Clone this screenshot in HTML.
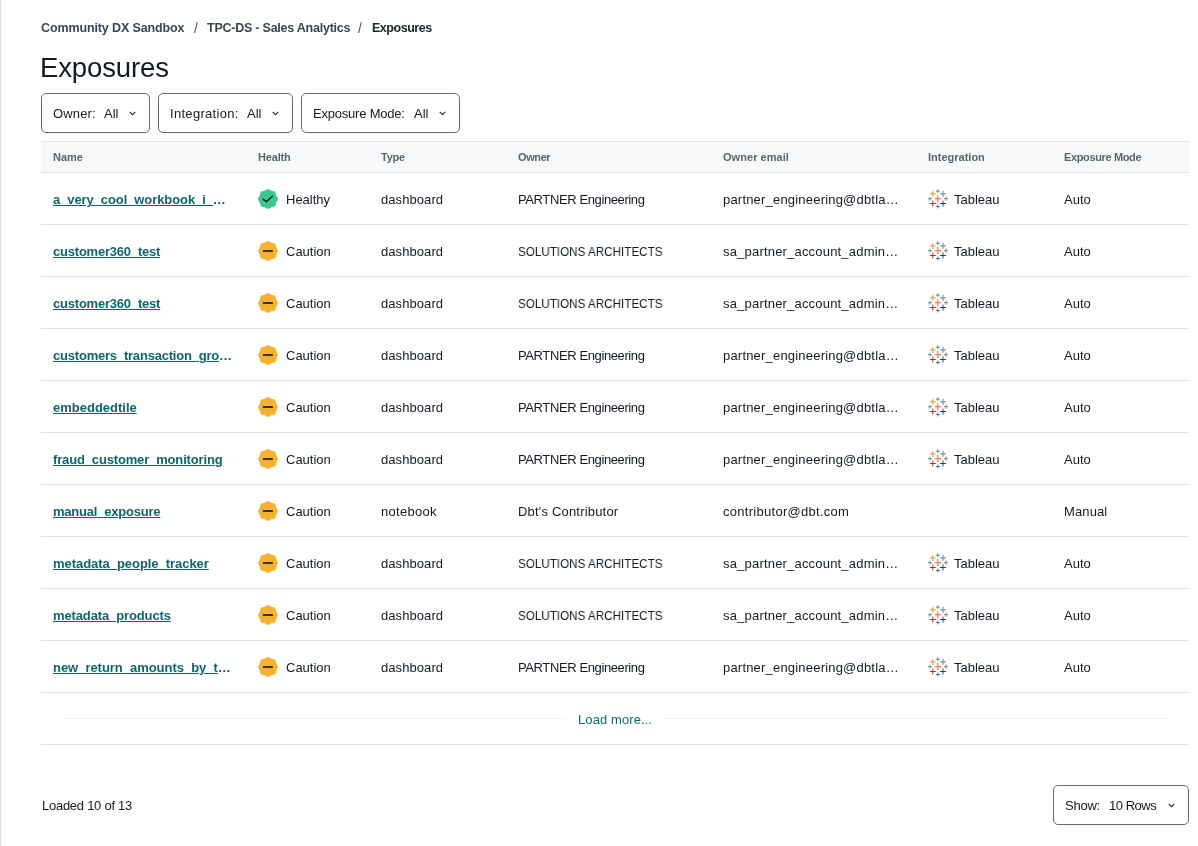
<!DOCTYPE html>
<html><head><meta charset="utf-8"><title>Exposures</title>
<style>
*{box-sizing:border-box;margin:0;padding:0}
html,body{width:1198px;height:846px;overflow:hidden;background:#fff}
body{font-family:"Liberation Sans",sans-serif;color:#1b2330;position:relative;-webkit-font-smoothing:antialiased}
.lb{position:absolute;left:0;top:0;width:1px;height:846px;background:#dfe1e6}
.lb2{position:absolute;left:1px;top:0;width:1px;height:846px;background:#f6f7f9}
.t{position:absolute;white-space:nowrap;line-height:20px;height:20px;will-change:transform}
.bc{font-weight:bold;font-size:12.5px;color:#3b4555}
.bcs{font-size:14px;color:#4f5866}
.bcc{font-weight:bold;font-size:12.5px;color:#1b2330}
.title{font-size:27.5px;line-height:40px;height:40px;color:#121a26}
.btn{position:absolute;top:93px;height:40px;border:1px solid #626b79;border-radius:5px;background:#fff}
.ft{font-size:13px;color:#131a26}
.chev{position:absolute}
.tbl{position:absolute;left:41px;top:141px;width:1148px}
.hdr{position:absolute;left:41px;top:141px;width:1148px;height:32px;background:#f7f8fa;border-top:1px solid #e2e3ea;border-bottom:1px solid #e2e3ea}
.hl{position:absolute;left:41px;width:1148px;height:1px;background:#e2e3ea}
.ht{font-weight:bold;font-size:11px;color:#5b6473}
.lk{font-weight:bold;font-size:13px;color:#0f666a}
.lk u{text-decoration:underline;text-decoration-thickness:1px;text-underline-offset:1px}
.c{font-size:13px;color:#131a26}
.bdg,.tab{position:absolute}
.faint{position:absolute;top:718px;height:1px;background:#f2f3f5}
.lm{font-size:13px;color:#116b70}
.sbtn{position:absolute;left:1053px;top:785px;width:136px;height:40px;border:1px solid #626b79;border-radius:5px}
</style></head><body>
<div class="lb"></div><div class="lb2"></div>

<div class="t bc" style="left:41px;top:17.67px;letter-spacing:-0.121px;">Community DX Sandbox</div>
<div class="t bcs" style="left:193.6px;top:17.65px;">/</div>
<div class="t bc" style="left:207px;top:17.67px;letter-spacing:-0.234px;">TPC-DS - Sales Analytics</div>
<div class="t bcs" style="left:358px;top:17.65px;">/</div>
<div class="t bcc" style="left:372px;top:17.67px;letter-spacing:-0.475px;">Exposures</div>
<div class="t title" style="left:40px;top:48.47px;letter-spacing:-0.126px;">Exposures</div>
<div class="btn" style="left:41px;width:109px"></div>
<div class="btn" style="left:158px;width:135px"></div>
<div class="btn" style="left:301px;width:159px"></div>
<div class="t ft" style="left:53px;top:103.50px;letter-spacing:0.140px;">Owner:</div>
<div class="t ft" style="left:104px;top:103.50px;">All</div>
<svg class="chev" style="left:128.5px;top:111px" width="7" height="5" viewBox="0 0 7 5"><path d="M0.7 0.9 L3.5 3.7 L6.3 0.9" fill="none" stroke="#252d3a" stroke-width="1.1"/></svg>
<div class="t ft" style="left:170px;top:103.50px;letter-spacing:0.300px;">Integration:</div>
<div class="t ft" style="left:246.5px;top:103.50px;">All</div>
<svg class="chev" style="left:272px;top:111px" width="7" height="5" viewBox="0 0 7 5"><path d="M0.7 0.9 L3.5 3.7 L6.3 0.9" fill="none" stroke="#252d3a" stroke-width="1.1"/></svg>
<div class="t ft" style="left:313px;top:103.50px;letter-spacing:-0.208px;">Exposure Mode:</div>
<div class="t ft" style="left:413.5px;top:103.50px;">All</div>
<svg class="chev" style="left:439px;top:111px" width="7" height="5" viewBox="0 0 7 5"><path d="M0.7 0.9 L3.5 3.7 L6.3 0.9" fill="none" stroke="#252d3a" stroke-width="1.1"/></svg>
<div class="hdr"></div>
<div class="t ht" style="left:53px;top:147.19px;">Name</div>
<div class="t ht" style="left:258px;top:147.19px;letter-spacing:-0.160px;">Health</div>
<div class="t ht" style="left:381px;top:147.19px;letter-spacing:-0.233px;">Type</div>
<div class="t ht" style="left:518px;top:147.19px;letter-spacing:-0.400px;">Owner</div>
<div class="t ht" style="left:723px;top:147.19px;letter-spacing:0.050px;">Owner email</div>
<div class="t ht" style="left:928px;top:147.19px;">Integration</div>
<div class="t ht" style="left:1064px;top:147.19px;letter-spacing:-0.367px;">Exposure Mode</div>
<div class="t lk" style="left:53px;top:189.50px;letter-spacing:-0.087px;"><u>a_very_cool_workbook_i_</u>…</div>
<svg class="bdg" style="left:258px;top:189px" width="20" height="20" viewBox="0 0 20 20"><path d="M10.00 0.05 L10.65 0.14 L11.27 0.38 L11.84 0.73 L12.38 1.11 L12.90 1.46 L13.43 1.73 L13.99 1.91 L14.60 2.03 L15.25 2.14 L15.90 2.30 L16.52 2.57 L17.04 2.96 L17.43 3.48 L17.70 4.10 L17.86 4.75 L17.97 5.40 L18.09 6.01 L18.27 6.57 L18.54 7.10 L18.89 7.62 L19.27 8.16 L19.62 8.73 L19.86 9.35 L19.95 10.00 L19.86 10.65 L19.62 11.27 L19.27 11.84 L18.89 12.38 L18.54 12.90 L18.27 13.43 L18.09 13.99 L17.97 14.60 L17.86 15.25 L17.70 15.90 L17.43 16.52 L17.04 17.04 L16.52 17.43 L15.90 17.70 L15.25 17.86 L14.60 17.97 L13.99 18.09 L13.43 18.27 L12.90 18.54 L12.38 18.89 L11.84 19.27 L11.27 19.62 L10.65 19.86 L10.00 19.95 L9.35 19.86 L8.73 19.62 L8.16 19.27 L7.62 18.89 L7.10 18.54 L6.57 18.27 L6.01 18.09 L5.40 17.97 L4.75 17.86 L4.10 17.70 L3.48 17.43 L2.96 17.04 L2.57 16.52 L2.30 15.90 L2.14 15.25 L2.03 14.60 L1.91 13.99 L1.73 13.43 L1.46 12.90 L1.11 12.38 L0.73 11.84 L0.38 11.27 L0.14 10.65 L0.05 10.00 L0.14 9.35 L0.38 8.73 L0.73 8.16 L1.11 7.62 L1.46 7.10 L1.73 6.57 L1.91 6.01 L2.03 5.40 L2.14 4.75 L2.30 4.10 L2.57 3.48 L2.96 2.96 L3.48 2.57 L4.10 2.30 L4.75 2.14 L5.40 2.03 L6.01 1.91 L6.57 1.73 L7.10 1.46 L7.62 1.11 L8.16 0.73 L8.73 0.38 L9.35 0.14Z" fill="#38ca8d"/><path d="M5.3 10.3 L8.4 12.7 L14.4 7.3" fill="none" stroke="#1a1f2c" stroke-width="1.5" stroke-linecap="round" stroke-linejoin="round"/></svg>
<div class="t c" style="left:286px;top:189.50px;">Healthy</div>
<div class="t c" style="left:381px;top:189.50px;letter-spacing:0.075px;">dashboard</div>
<div class="t c" style="left:518px;top:189.50px;letter-spacing:-0.389px;">PARTNER Engineering</div>
<div class="t c" style="left:723px;top:189.50px;letter-spacing:0.196px;">partner_engineering@dbtla…</div>
<svg class="tab" style="left:928px;top:189px" width="20" height="20" viewBox="0 0 20 20"><path d="M6.60 9.7H13.20M9.9 5.90V13.50" stroke="#e8762d" stroke-width="1.1"/><path d="M1.80 4.9H7.80M4.8 1.90V7.90" stroke="#eb912c" stroke-width="1.0"/><path d="M7.90 2.2H11.90M9.9 0.20V4.20" stroke="#5b879b" stroke-width="0.9"/><path d="M12.00 4.9H18.00M15.0 1.90V7.90" stroke="#5b879b" stroke-width="1.0"/><path d="M0.00 9.7H4.00M2.0 7.70V11.70" stroke="#5b879b" stroke-width="0.9"/><path d="M16.00 9.7H20.00M18.0 7.70V11.70" stroke="#7b75a8" stroke-width="0.9"/><path d="M1.80 14.5H7.80M4.8 11.50V17.50" stroke="#c72037" stroke-width="1.0"/><path d="M7.90 17.5H11.90M9.9 15.50V19.50" stroke="#5c6692" stroke-width="0.9"/><path d="M12.00 14.5H18.00M15.0 11.50V17.50" stroke="#1f457e" stroke-width="1.0"/></svg>
<div class="t c" style="left:954px;top:189.50px;">Tableau</div>
<div class="t c" style="left:1064px;top:189.50px;">Auto</div>
<div class="hl" style="top:224px"></div>
<div class="t lk" style="left:53px;top:241.50px;letter-spacing:-0.213px;"><u>customer360_test</u></div>
<svg class="bdg" style="left:258px;top:241px" width="20" height="20" viewBox="0 0 20 20"><path d="M10.00 0.05 L10.65 0.14 L11.27 0.38 L11.84 0.73 L12.38 1.11 L12.90 1.46 L13.43 1.73 L13.99 1.91 L14.60 2.03 L15.25 2.14 L15.90 2.30 L16.52 2.57 L17.04 2.96 L17.43 3.48 L17.70 4.10 L17.86 4.75 L17.97 5.40 L18.09 6.01 L18.27 6.57 L18.54 7.10 L18.89 7.62 L19.27 8.16 L19.62 8.73 L19.86 9.35 L19.95 10.00 L19.86 10.65 L19.62 11.27 L19.27 11.84 L18.89 12.38 L18.54 12.90 L18.27 13.43 L18.09 13.99 L17.97 14.60 L17.86 15.25 L17.70 15.90 L17.43 16.52 L17.04 17.04 L16.52 17.43 L15.90 17.70 L15.25 17.86 L14.60 17.97 L13.99 18.09 L13.43 18.27 L12.90 18.54 L12.38 18.89 L11.84 19.27 L11.27 19.62 L10.65 19.86 L10.00 19.95 L9.35 19.86 L8.73 19.62 L8.16 19.27 L7.62 18.89 L7.10 18.54 L6.57 18.27 L6.01 18.09 L5.40 17.97 L4.75 17.86 L4.10 17.70 L3.48 17.43 L2.96 17.04 L2.57 16.52 L2.30 15.90 L2.14 15.25 L2.03 14.60 L1.91 13.99 L1.73 13.43 L1.46 12.90 L1.11 12.38 L0.73 11.84 L0.38 11.27 L0.14 10.65 L0.05 10.00 L0.14 9.35 L0.38 8.73 L0.73 8.16 L1.11 7.62 L1.46 7.10 L1.73 6.57 L1.91 6.01 L2.03 5.40 L2.14 4.75 L2.30 4.10 L2.57 3.48 L2.96 2.96 L3.48 2.57 L4.10 2.30 L4.75 2.14 L5.40 2.03 L6.01 1.91 L6.57 1.73 L7.10 1.46 L7.62 1.11 L8.16 0.73 L8.73 0.38 L9.35 0.14Z" fill="#f7b232"/><rect x="4.9" y="9" width="10" height="2" fill="#3a3428"/></svg>
<div class="t c" style="left:286px;top:241.50px;">Caution</div>
<div class="t c" style="left:381px;top:241.50px;letter-spacing:0.075px;">dashboard</div>
<div class="t c" style="left:518px;top:241.50px;transform:scaleX(0.897);transform-origin:0 0;">SOLUTIONS ARCHITECTS</div>
<div class="t c" style="left:723px;top:241.50px;letter-spacing:0.192px;">sa_partner_account_admin…</div>
<svg class="tab" style="left:928px;top:241px" width="20" height="20" viewBox="0 0 20 20"><path d="M6.60 9.7H13.20M9.9 5.90V13.50" stroke="#e8762d" stroke-width="1.1"/><path d="M1.80 4.9H7.80M4.8 1.90V7.90" stroke="#eb912c" stroke-width="1.0"/><path d="M7.90 2.2H11.90M9.9 0.20V4.20" stroke="#5b879b" stroke-width="0.9"/><path d="M12.00 4.9H18.00M15.0 1.90V7.90" stroke="#5b879b" stroke-width="1.0"/><path d="M0.00 9.7H4.00M2.0 7.70V11.70" stroke="#5b879b" stroke-width="0.9"/><path d="M16.00 9.7H20.00M18.0 7.70V11.70" stroke="#7b75a8" stroke-width="0.9"/><path d="M1.80 14.5H7.80M4.8 11.50V17.50" stroke="#c72037" stroke-width="1.0"/><path d="M7.90 17.5H11.90M9.9 15.50V19.50" stroke="#5c6692" stroke-width="0.9"/><path d="M12.00 14.5H18.00M15.0 11.50V17.50" stroke="#1f457e" stroke-width="1.0"/></svg>
<div class="t c" style="left:954px;top:241.50px;">Tableau</div>
<div class="t c" style="left:1064px;top:241.50px;">Auto</div>
<div class="hl" style="top:276px"></div>
<div class="t lk" style="left:53px;top:293.50px;letter-spacing:-0.213px;"><u>customer360_test</u></div>
<svg class="bdg" style="left:258px;top:293px" width="20" height="20" viewBox="0 0 20 20"><path d="M10.00 0.05 L10.65 0.14 L11.27 0.38 L11.84 0.73 L12.38 1.11 L12.90 1.46 L13.43 1.73 L13.99 1.91 L14.60 2.03 L15.25 2.14 L15.90 2.30 L16.52 2.57 L17.04 2.96 L17.43 3.48 L17.70 4.10 L17.86 4.75 L17.97 5.40 L18.09 6.01 L18.27 6.57 L18.54 7.10 L18.89 7.62 L19.27 8.16 L19.62 8.73 L19.86 9.35 L19.95 10.00 L19.86 10.65 L19.62 11.27 L19.27 11.84 L18.89 12.38 L18.54 12.90 L18.27 13.43 L18.09 13.99 L17.97 14.60 L17.86 15.25 L17.70 15.90 L17.43 16.52 L17.04 17.04 L16.52 17.43 L15.90 17.70 L15.25 17.86 L14.60 17.97 L13.99 18.09 L13.43 18.27 L12.90 18.54 L12.38 18.89 L11.84 19.27 L11.27 19.62 L10.65 19.86 L10.00 19.95 L9.35 19.86 L8.73 19.62 L8.16 19.27 L7.62 18.89 L7.10 18.54 L6.57 18.27 L6.01 18.09 L5.40 17.97 L4.75 17.86 L4.10 17.70 L3.48 17.43 L2.96 17.04 L2.57 16.52 L2.30 15.90 L2.14 15.25 L2.03 14.60 L1.91 13.99 L1.73 13.43 L1.46 12.90 L1.11 12.38 L0.73 11.84 L0.38 11.27 L0.14 10.65 L0.05 10.00 L0.14 9.35 L0.38 8.73 L0.73 8.16 L1.11 7.62 L1.46 7.10 L1.73 6.57 L1.91 6.01 L2.03 5.40 L2.14 4.75 L2.30 4.10 L2.57 3.48 L2.96 2.96 L3.48 2.57 L4.10 2.30 L4.75 2.14 L5.40 2.03 L6.01 1.91 L6.57 1.73 L7.10 1.46 L7.62 1.11 L8.16 0.73 L8.73 0.38 L9.35 0.14Z" fill="#f7b232"/><rect x="4.9" y="9" width="10" height="2" fill="#3a3428"/></svg>
<div class="t c" style="left:286px;top:293.50px;">Caution</div>
<div class="t c" style="left:381px;top:293.50px;letter-spacing:0.075px;">dashboard</div>
<div class="t c" style="left:518px;top:293.50px;transform:scaleX(0.897);transform-origin:0 0;">SOLUTIONS ARCHITECTS</div>
<div class="t c" style="left:723px;top:293.50px;letter-spacing:0.192px;">sa_partner_account_admin…</div>
<svg class="tab" style="left:928px;top:293px" width="20" height="20" viewBox="0 0 20 20"><path d="M6.60 9.7H13.20M9.9 5.90V13.50" stroke="#e8762d" stroke-width="1.1"/><path d="M1.80 4.9H7.80M4.8 1.90V7.90" stroke="#eb912c" stroke-width="1.0"/><path d="M7.90 2.2H11.90M9.9 0.20V4.20" stroke="#5b879b" stroke-width="0.9"/><path d="M12.00 4.9H18.00M15.0 1.90V7.90" stroke="#5b879b" stroke-width="1.0"/><path d="M0.00 9.7H4.00M2.0 7.70V11.70" stroke="#5b879b" stroke-width="0.9"/><path d="M16.00 9.7H20.00M18.0 7.70V11.70" stroke="#7b75a8" stroke-width="0.9"/><path d="M1.80 14.5H7.80M4.8 11.50V17.50" stroke="#c72037" stroke-width="1.0"/><path d="M7.90 17.5H11.90M9.9 15.50V19.50" stroke="#5c6692" stroke-width="0.9"/><path d="M12.00 14.5H18.00M15.0 11.50V17.50" stroke="#1f457e" stroke-width="1.0"/></svg>
<div class="t c" style="left:954px;top:293.50px;">Tableau</div>
<div class="t c" style="left:1064px;top:293.50px;">Auto</div>
<div class="hl" style="top:328px"></div>
<div class="t lk" style="left:53px;top:345.50px;letter-spacing:-0.208px;"><u>customers_transaction_gro</u>…</div>
<svg class="bdg" style="left:258px;top:345px" width="20" height="20" viewBox="0 0 20 20"><path d="M10.00 0.05 L10.65 0.14 L11.27 0.38 L11.84 0.73 L12.38 1.11 L12.90 1.46 L13.43 1.73 L13.99 1.91 L14.60 2.03 L15.25 2.14 L15.90 2.30 L16.52 2.57 L17.04 2.96 L17.43 3.48 L17.70 4.10 L17.86 4.75 L17.97 5.40 L18.09 6.01 L18.27 6.57 L18.54 7.10 L18.89 7.62 L19.27 8.16 L19.62 8.73 L19.86 9.35 L19.95 10.00 L19.86 10.65 L19.62 11.27 L19.27 11.84 L18.89 12.38 L18.54 12.90 L18.27 13.43 L18.09 13.99 L17.97 14.60 L17.86 15.25 L17.70 15.90 L17.43 16.52 L17.04 17.04 L16.52 17.43 L15.90 17.70 L15.25 17.86 L14.60 17.97 L13.99 18.09 L13.43 18.27 L12.90 18.54 L12.38 18.89 L11.84 19.27 L11.27 19.62 L10.65 19.86 L10.00 19.95 L9.35 19.86 L8.73 19.62 L8.16 19.27 L7.62 18.89 L7.10 18.54 L6.57 18.27 L6.01 18.09 L5.40 17.97 L4.75 17.86 L4.10 17.70 L3.48 17.43 L2.96 17.04 L2.57 16.52 L2.30 15.90 L2.14 15.25 L2.03 14.60 L1.91 13.99 L1.73 13.43 L1.46 12.90 L1.11 12.38 L0.73 11.84 L0.38 11.27 L0.14 10.65 L0.05 10.00 L0.14 9.35 L0.38 8.73 L0.73 8.16 L1.11 7.62 L1.46 7.10 L1.73 6.57 L1.91 6.01 L2.03 5.40 L2.14 4.75 L2.30 4.10 L2.57 3.48 L2.96 2.96 L3.48 2.57 L4.10 2.30 L4.75 2.14 L5.40 2.03 L6.01 1.91 L6.57 1.73 L7.10 1.46 L7.62 1.11 L8.16 0.73 L8.73 0.38 L9.35 0.14Z" fill="#f7b232"/><rect x="4.9" y="9" width="10" height="2" fill="#3a3428"/></svg>
<div class="t c" style="left:286px;top:345.50px;">Caution</div>
<div class="t c" style="left:381px;top:345.50px;letter-spacing:0.075px;">dashboard</div>
<div class="t c" style="left:518px;top:345.50px;letter-spacing:-0.389px;">PARTNER Engineering</div>
<div class="t c" style="left:723px;top:345.50px;letter-spacing:0.196px;">partner_engineering@dbtla…</div>
<svg class="tab" style="left:928px;top:345px" width="20" height="20" viewBox="0 0 20 20"><path d="M6.60 9.7H13.20M9.9 5.90V13.50" stroke="#e8762d" stroke-width="1.1"/><path d="M1.80 4.9H7.80M4.8 1.90V7.90" stroke="#eb912c" stroke-width="1.0"/><path d="M7.90 2.2H11.90M9.9 0.20V4.20" stroke="#5b879b" stroke-width="0.9"/><path d="M12.00 4.9H18.00M15.0 1.90V7.90" stroke="#5b879b" stroke-width="1.0"/><path d="M0.00 9.7H4.00M2.0 7.70V11.70" stroke="#5b879b" stroke-width="0.9"/><path d="M16.00 9.7H20.00M18.0 7.70V11.70" stroke="#7b75a8" stroke-width="0.9"/><path d="M1.80 14.5H7.80M4.8 11.50V17.50" stroke="#c72037" stroke-width="1.0"/><path d="M7.90 17.5H11.90M9.9 15.50V19.50" stroke="#5c6692" stroke-width="0.9"/><path d="M12.00 14.5H18.00M15.0 11.50V17.50" stroke="#1f457e" stroke-width="1.0"/></svg>
<div class="t c" style="left:954px;top:345.50px;">Tableau</div>
<div class="t c" style="left:1064px;top:345.50px;">Auto</div>
<div class="hl" style="top:380px"></div>
<div class="t lk" style="left:53px;top:397.50px;"><u>embeddedtile</u></div>
<svg class="bdg" style="left:258px;top:397px" width="20" height="20" viewBox="0 0 20 20"><path d="M10.00 0.05 L10.65 0.14 L11.27 0.38 L11.84 0.73 L12.38 1.11 L12.90 1.46 L13.43 1.73 L13.99 1.91 L14.60 2.03 L15.25 2.14 L15.90 2.30 L16.52 2.57 L17.04 2.96 L17.43 3.48 L17.70 4.10 L17.86 4.75 L17.97 5.40 L18.09 6.01 L18.27 6.57 L18.54 7.10 L18.89 7.62 L19.27 8.16 L19.62 8.73 L19.86 9.35 L19.95 10.00 L19.86 10.65 L19.62 11.27 L19.27 11.84 L18.89 12.38 L18.54 12.90 L18.27 13.43 L18.09 13.99 L17.97 14.60 L17.86 15.25 L17.70 15.90 L17.43 16.52 L17.04 17.04 L16.52 17.43 L15.90 17.70 L15.25 17.86 L14.60 17.97 L13.99 18.09 L13.43 18.27 L12.90 18.54 L12.38 18.89 L11.84 19.27 L11.27 19.62 L10.65 19.86 L10.00 19.95 L9.35 19.86 L8.73 19.62 L8.16 19.27 L7.62 18.89 L7.10 18.54 L6.57 18.27 L6.01 18.09 L5.40 17.97 L4.75 17.86 L4.10 17.70 L3.48 17.43 L2.96 17.04 L2.57 16.52 L2.30 15.90 L2.14 15.25 L2.03 14.60 L1.91 13.99 L1.73 13.43 L1.46 12.90 L1.11 12.38 L0.73 11.84 L0.38 11.27 L0.14 10.65 L0.05 10.00 L0.14 9.35 L0.38 8.73 L0.73 8.16 L1.11 7.62 L1.46 7.10 L1.73 6.57 L1.91 6.01 L2.03 5.40 L2.14 4.75 L2.30 4.10 L2.57 3.48 L2.96 2.96 L3.48 2.57 L4.10 2.30 L4.75 2.14 L5.40 2.03 L6.01 1.91 L6.57 1.73 L7.10 1.46 L7.62 1.11 L8.16 0.73 L8.73 0.38 L9.35 0.14Z" fill="#f7b232"/><rect x="4.9" y="9" width="10" height="2" fill="#3a3428"/></svg>
<div class="t c" style="left:286px;top:397.50px;">Caution</div>
<div class="t c" style="left:381px;top:397.50px;letter-spacing:0.075px;">dashboard</div>
<div class="t c" style="left:518px;top:397.50px;letter-spacing:-0.389px;">PARTNER Engineering</div>
<div class="t c" style="left:723px;top:397.50px;letter-spacing:0.196px;">partner_engineering@dbtla…</div>
<svg class="tab" style="left:928px;top:397px" width="20" height="20" viewBox="0 0 20 20"><path d="M6.60 9.7H13.20M9.9 5.90V13.50" stroke="#e8762d" stroke-width="1.1"/><path d="M1.80 4.9H7.80M4.8 1.90V7.90" stroke="#eb912c" stroke-width="1.0"/><path d="M7.90 2.2H11.90M9.9 0.20V4.20" stroke="#5b879b" stroke-width="0.9"/><path d="M12.00 4.9H18.00M15.0 1.90V7.90" stroke="#5b879b" stroke-width="1.0"/><path d="M0.00 9.7H4.00M2.0 7.70V11.70" stroke="#5b879b" stroke-width="0.9"/><path d="M16.00 9.7H20.00M18.0 7.70V11.70" stroke="#7b75a8" stroke-width="0.9"/><path d="M1.80 14.5H7.80M4.8 11.50V17.50" stroke="#c72037" stroke-width="1.0"/><path d="M7.90 17.5H11.90M9.9 15.50V19.50" stroke="#5c6692" stroke-width="0.9"/><path d="M12.00 14.5H18.00M15.0 11.50V17.50" stroke="#1f457e" stroke-width="1.0"/></svg>
<div class="t c" style="left:954px;top:397.50px;">Tableau</div>
<div class="t c" style="left:1064px;top:397.50px;">Auto</div>
<div class="hl" style="top:432px"></div>
<div class="t lk" style="left:53px;top:449.50px;letter-spacing:-0.154px;"><u>fraud_customer_monitoring</u></div>
<svg class="bdg" style="left:258px;top:449px" width="20" height="20" viewBox="0 0 20 20"><path d="M10.00 0.05 L10.65 0.14 L11.27 0.38 L11.84 0.73 L12.38 1.11 L12.90 1.46 L13.43 1.73 L13.99 1.91 L14.60 2.03 L15.25 2.14 L15.90 2.30 L16.52 2.57 L17.04 2.96 L17.43 3.48 L17.70 4.10 L17.86 4.75 L17.97 5.40 L18.09 6.01 L18.27 6.57 L18.54 7.10 L18.89 7.62 L19.27 8.16 L19.62 8.73 L19.86 9.35 L19.95 10.00 L19.86 10.65 L19.62 11.27 L19.27 11.84 L18.89 12.38 L18.54 12.90 L18.27 13.43 L18.09 13.99 L17.97 14.60 L17.86 15.25 L17.70 15.90 L17.43 16.52 L17.04 17.04 L16.52 17.43 L15.90 17.70 L15.25 17.86 L14.60 17.97 L13.99 18.09 L13.43 18.27 L12.90 18.54 L12.38 18.89 L11.84 19.27 L11.27 19.62 L10.65 19.86 L10.00 19.95 L9.35 19.86 L8.73 19.62 L8.16 19.27 L7.62 18.89 L7.10 18.54 L6.57 18.27 L6.01 18.09 L5.40 17.97 L4.75 17.86 L4.10 17.70 L3.48 17.43 L2.96 17.04 L2.57 16.52 L2.30 15.90 L2.14 15.25 L2.03 14.60 L1.91 13.99 L1.73 13.43 L1.46 12.90 L1.11 12.38 L0.73 11.84 L0.38 11.27 L0.14 10.65 L0.05 10.00 L0.14 9.35 L0.38 8.73 L0.73 8.16 L1.11 7.62 L1.46 7.10 L1.73 6.57 L1.91 6.01 L2.03 5.40 L2.14 4.75 L2.30 4.10 L2.57 3.48 L2.96 2.96 L3.48 2.57 L4.10 2.30 L4.75 2.14 L5.40 2.03 L6.01 1.91 L6.57 1.73 L7.10 1.46 L7.62 1.11 L8.16 0.73 L8.73 0.38 L9.35 0.14Z" fill="#f7b232"/><rect x="4.9" y="9" width="10" height="2" fill="#3a3428"/></svg>
<div class="t c" style="left:286px;top:449.50px;">Caution</div>
<div class="t c" style="left:381px;top:449.50px;letter-spacing:0.075px;">dashboard</div>
<div class="t c" style="left:518px;top:449.50px;letter-spacing:-0.389px;">PARTNER Engineering</div>
<div class="t c" style="left:723px;top:449.50px;letter-spacing:0.196px;">partner_engineering@dbtla…</div>
<svg class="tab" style="left:928px;top:449px" width="20" height="20" viewBox="0 0 20 20"><path d="M6.60 9.7H13.20M9.9 5.90V13.50" stroke="#e8762d" stroke-width="1.1"/><path d="M1.80 4.9H7.80M4.8 1.90V7.90" stroke="#eb912c" stroke-width="1.0"/><path d="M7.90 2.2H11.90M9.9 0.20V4.20" stroke="#5b879b" stroke-width="0.9"/><path d="M12.00 4.9H18.00M15.0 1.90V7.90" stroke="#5b879b" stroke-width="1.0"/><path d="M0.00 9.7H4.00M2.0 7.70V11.70" stroke="#5b879b" stroke-width="0.9"/><path d="M16.00 9.7H20.00M18.0 7.70V11.70" stroke="#7b75a8" stroke-width="0.9"/><path d="M1.80 14.5H7.80M4.8 11.50V17.50" stroke="#c72037" stroke-width="1.0"/><path d="M7.90 17.5H11.90M9.9 15.50V19.50" stroke="#5c6692" stroke-width="0.9"/><path d="M12.00 14.5H18.00M15.0 11.50V17.50" stroke="#1f457e" stroke-width="1.0"/></svg>
<div class="t c" style="left:954px;top:449.50px;">Tableau</div>
<div class="t c" style="left:1064px;top:449.50px;">Auto</div>
<div class="hl" style="top:484px"></div>
<div class="t lk" style="left:53px;top:501.50px;letter-spacing:-0.214px;"><u>manual_exposure</u></div>
<svg class="bdg" style="left:258px;top:501px" width="20" height="20" viewBox="0 0 20 20"><path d="M10.00 0.05 L10.65 0.14 L11.27 0.38 L11.84 0.73 L12.38 1.11 L12.90 1.46 L13.43 1.73 L13.99 1.91 L14.60 2.03 L15.25 2.14 L15.90 2.30 L16.52 2.57 L17.04 2.96 L17.43 3.48 L17.70 4.10 L17.86 4.75 L17.97 5.40 L18.09 6.01 L18.27 6.57 L18.54 7.10 L18.89 7.62 L19.27 8.16 L19.62 8.73 L19.86 9.35 L19.95 10.00 L19.86 10.65 L19.62 11.27 L19.27 11.84 L18.89 12.38 L18.54 12.90 L18.27 13.43 L18.09 13.99 L17.97 14.60 L17.86 15.25 L17.70 15.90 L17.43 16.52 L17.04 17.04 L16.52 17.43 L15.90 17.70 L15.25 17.86 L14.60 17.97 L13.99 18.09 L13.43 18.27 L12.90 18.54 L12.38 18.89 L11.84 19.27 L11.27 19.62 L10.65 19.86 L10.00 19.95 L9.35 19.86 L8.73 19.62 L8.16 19.27 L7.62 18.89 L7.10 18.54 L6.57 18.27 L6.01 18.09 L5.40 17.97 L4.75 17.86 L4.10 17.70 L3.48 17.43 L2.96 17.04 L2.57 16.52 L2.30 15.90 L2.14 15.25 L2.03 14.60 L1.91 13.99 L1.73 13.43 L1.46 12.90 L1.11 12.38 L0.73 11.84 L0.38 11.27 L0.14 10.65 L0.05 10.00 L0.14 9.35 L0.38 8.73 L0.73 8.16 L1.11 7.62 L1.46 7.10 L1.73 6.57 L1.91 6.01 L2.03 5.40 L2.14 4.75 L2.30 4.10 L2.57 3.48 L2.96 2.96 L3.48 2.57 L4.10 2.30 L4.75 2.14 L5.40 2.03 L6.01 1.91 L6.57 1.73 L7.10 1.46 L7.62 1.11 L8.16 0.73 L8.73 0.38 L9.35 0.14Z" fill="#f7b232"/><rect x="4.9" y="9" width="10" height="2" fill="#3a3428"/></svg>
<div class="t c" style="left:286px;top:501.50px;">Caution</div>
<div class="t c" style="left:381px;top:501.50px;letter-spacing:0.285px;">notebook</div>
<div class="t c" style="left:518px;top:501.50px;letter-spacing:0.188px;">Dbt's Contributor</div>
<div class="t c" style="left:723px;top:501.50px;letter-spacing:0.283px;">contributor@dbt.com</div>
<div class="t c" style="left:1064px;top:501.50px;letter-spacing:0.120px;">Manual</div>
<div class="hl" style="top:536px"></div>
<div class="t lk" style="left:53px;top:553.50px;letter-spacing:-0.045px;"><u>metadata_people_tracker</u></div>
<svg class="bdg" style="left:258px;top:553px" width="20" height="20" viewBox="0 0 20 20"><path d="M10.00 0.05 L10.65 0.14 L11.27 0.38 L11.84 0.73 L12.38 1.11 L12.90 1.46 L13.43 1.73 L13.99 1.91 L14.60 2.03 L15.25 2.14 L15.90 2.30 L16.52 2.57 L17.04 2.96 L17.43 3.48 L17.70 4.10 L17.86 4.75 L17.97 5.40 L18.09 6.01 L18.27 6.57 L18.54 7.10 L18.89 7.62 L19.27 8.16 L19.62 8.73 L19.86 9.35 L19.95 10.00 L19.86 10.65 L19.62 11.27 L19.27 11.84 L18.89 12.38 L18.54 12.90 L18.27 13.43 L18.09 13.99 L17.97 14.60 L17.86 15.25 L17.70 15.90 L17.43 16.52 L17.04 17.04 L16.52 17.43 L15.90 17.70 L15.25 17.86 L14.60 17.97 L13.99 18.09 L13.43 18.27 L12.90 18.54 L12.38 18.89 L11.84 19.27 L11.27 19.62 L10.65 19.86 L10.00 19.95 L9.35 19.86 L8.73 19.62 L8.16 19.27 L7.62 18.89 L7.10 18.54 L6.57 18.27 L6.01 18.09 L5.40 17.97 L4.75 17.86 L4.10 17.70 L3.48 17.43 L2.96 17.04 L2.57 16.52 L2.30 15.90 L2.14 15.25 L2.03 14.60 L1.91 13.99 L1.73 13.43 L1.46 12.90 L1.11 12.38 L0.73 11.84 L0.38 11.27 L0.14 10.65 L0.05 10.00 L0.14 9.35 L0.38 8.73 L0.73 8.16 L1.11 7.62 L1.46 7.10 L1.73 6.57 L1.91 6.01 L2.03 5.40 L2.14 4.75 L2.30 4.10 L2.57 3.48 L2.96 2.96 L3.48 2.57 L4.10 2.30 L4.75 2.14 L5.40 2.03 L6.01 1.91 L6.57 1.73 L7.10 1.46 L7.62 1.11 L8.16 0.73 L8.73 0.38 L9.35 0.14Z" fill="#f7b232"/><rect x="4.9" y="9" width="10" height="2" fill="#3a3428"/></svg>
<div class="t c" style="left:286px;top:553.50px;">Caution</div>
<div class="t c" style="left:381px;top:553.50px;letter-spacing:0.075px;">dashboard</div>
<div class="t c" style="left:518px;top:553.50px;transform:scaleX(0.897);transform-origin:0 0;">SOLUTIONS ARCHITECTS</div>
<div class="t c" style="left:723px;top:553.50px;letter-spacing:0.192px;">sa_partner_account_admin…</div>
<svg class="tab" style="left:928px;top:553px" width="20" height="20" viewBox="0 0 20 20"><path d="M6.60 9.7H13.20M9.9 5.90V13.50" stroke="#e8762d" stroke-width="1.1"/><path d="M1.80 4.9H7.80M4.8 1.90V7.90" stroke="#eb912c" stroke-width="1.0"/><path d="M7.90 2.2H11.90M9.9 0.20V4.20" stroke="#5b879b" stroke-width="0.9"/><path d="M12.00 4.9H18.00M15.0 1.90V7.90" stroke="#5b879b" stroke-width="1.0"/><path d="M0.00 9.7H4.00M2.0 7.70V11.70" stroke="#5b879b" stroke-width="0.9"/><path d="M16.00 9.7H20.00M18.0 7.70V11.70" stroke="#7b75a8" stroke-width="0.9"/><path d="M1.80 14.5H7.80M4.8 11.50V17.50" stroke="#c72037" stroke-width="1.0"/><path d="M7.90 17.5H11.90M9.9 15.50V19.50" stroke="#5c6692" stroke-width="0.9"/><path d="M12.00 14.5H18.00M15.0 11.50V17.50" stroke="#1f457e" stroke-width="1.0"/></svg>
<div class="t c" style="left:954px;top:553.50px;">Tableau</div>
<div class="t c" style="left:1064px;top:553.50px;">Auto</div>
<div class="hl" style="top:588px"></div>
<div class="t lk" style="left:53px;top:605.50px;letter-spacing:-0.125px;"><u>metadata_products</u></div>
<svg class="bdg" style="left:258px;top:605px" width="20" height="20" viewBox="0 0 20 20"><path d="M10.00 0.05 L10.65 0.14 L11.27 0.38 L11.84 0.73 L12.38 1.11 L12.90 1.46 L13.43 1.73 L13.99 1.91 L14.60 2.03 L15.25 2.14 L15.90 2.30 L16.52 2.57 L17.04 2.96 L17.43 3.48 L17.70 4.10 L17.86 4.75 L17.97 5.40 L18.09 6.01 L18.27 6.57 L18.54 7.10 L18.89 7.62 L19.27 8.16 L19.62 8.73 L19.86 9.35 L19.95 10.00 L19.86 10.65 L19.62 11.27 L19.27 11.84 L18.89 12.38 L18.54 12.90 L18.27 13.43 L18.09 13.99 L17.97 14.60 L17.86 15.25 L17.70 15.90 L17.43 16.52 L17.04 17.04 L16.52 17.43 L15.90 17.70 L15.25 17.86 L14.60 17.97 L13.99 18.09 L13.43 18.27 L12.90 18.54 L12.38 18.89 L11.84 19.27 L11.27 19.62 L10.65 19.86 L10.00 19.95 L9.35 19.86 L8.73 19.62 L8.16 19.27 L7.62 18.89 L7.10 18.54 L6.57 18.27 L6.01 18.09 L5.40 17.97 L4.75 17.86 L4.10 17.70 L3.48 17.43 L2.96 17.04 L2.57 16.52 L2.30 15.90 L2.14 15.25 L2.03 14.60 L1.91 13.99 L1.73 13.43 L1.46 12.90 L1.11 12.38 L0.73 11.84 L0.38 11.27 L0.14 10.65 L0.05 10.00 L0.14 9.35 L0.38 8.73 L0.73 8.16 L1.11 7.62 L1.46 7.10 L1.73 6.57 L1.91 6.01 L2.03 5.40 L2.14 4.75 L2.30 4.10 L2.57 3.48 L2.96 2.96 L3.48 2.57 L4.10 2.30 L4.75 2.14 L5.40 2.03 L6.01 1.91 L6.57 1.73 L7.10 1.46 L7.62 1.11 L8.16 0.73 L8.73 0.38 L9.35 0.14Z" fill="#f7b232"/><rect x="4.9" y="9" width="10" height="2" fill="#3a3428"/></svg>
<div class="t c" style="left:286px;top:605.50px;">Caution</div>
<div class="t c" style="left:381px;top:605.50px;letter-spacing:0.075px;">dashboard</div>
<div class="t c" style="left:518px;top:605.50px;transform:scaleX(0.897);transform-origin:0 0;">SOLUTIONS ARCHITECTS</div>
<div class="t c" style="left:723px;top:605.50px;letter-spacing:0.192px;">sa_partner_account_admin…</div>
<svg class="tab" style="left:928px;top:605px" width="20" height="20" viewBox="0 0 20 20"><path d="M6.60 9.7H13.20M9.9 5.90V13.50" stroke="#e8762d" stroke-width="1.1"/><path d="M1.80 4.9H7.80M4.8 1.90V7.90" stroke="#eb912c" stroke-width="1.0"/><path d="M7.90 2.2H11.90M9.9 0.20V4.20" stroke="#5b879b" stroke-width="0.9"/><path d="M12.00 4.9H18.00M15.0 1.90V7.90" stroke="#5b879b" stroke-width="1.0"/><path d="M0.00 9.7H4.00M2.0 7.70V11.70" stroke="#5b879b" stroke-width="0.9"/><path d="M16.00 9.7H20.00M18.0 7.70V11.70" stroke="#7b75a8" stroke-width="0.9"/><path d="M1.80 14.5H7.80M4.8 11.50V17.50" stroke="#c72037" stroke-width="1.0"/><path d="M7.90 17.5H11.90M9.9 15.50V19.50" stroke="#5c6692" stroke-width="0.9"/><path d="M12.00 14.5H18.00M15.0 11.50V17.50" stroke="#1f457e" stroke-width="1.0"/></svg>
<div class="t c" style="left:954px;top:605.50px;">Tableau</div>
<div class="t c" style="left:1064px;top:605.50px;">Auto</div>
<div class="hl" style="top:640px"></div>
<div class="t lk" style="left:53px;top:657.50px;letter-spacing:-0.030px;"><u>new_return_amounts_by_t</u>…</div>
<svg class="bdg" style="left:258px;top:657px" width="20" height="20" viewBox="0 0 20 20"><path d="M10.00 0.05 L10.65 0.14 L11.27 0.38 L11.84 0.73 L12.38 1.11 L12.90 1.46 L13.43 1.73 L13.99 1.91 L14.60 2.03 L15.25 2.14 L15.90 2.30 L16.52 2.57 L17.04 2.96 L17.43 3.48 L17.70 4.10 L17.86 4.75 L17.97 5.40 L18.09 6.01 L18.27 6.57 L18.54 7.10 L18.89 7.62 L19.27 8.16 L19.62 8.73 L19.86 9.35 L19.95 10.00 L19.86 10.65 L19.62 11.27 L19.27 11.84 L18.89 12.38 L18.54 12.90 L18.27 13.43 L18.09 13.99 L17.97 14.60 L17.86 15.25 L17.70 15.90 L17.43 16.52 L17.04 17.04 L16.52 17.43 L15.90 17.70 L15.25 17.86 L14.60 17.97 L13.99 18.09 L13.43 18.27 L12.90 18.54 L12.38 18.89 L11.84 19.27 L11.27 19.62 L10.65 19.86 L10.00 19.95 L9.35 19.86 L8.73 19.62 L8.16 19.27 L7.62 18.89 L7.10 18.54 L6.57 18.27 L6.01 18.09 L5.40 17.97 L4.75 17.86 L4.10 17.70 L3.48 17.43 L2.96 17.04 L2.57 16.52 L2.30 15.90 L2.14 15.25 L2.03 14.60 L1.91 13.99 L1.73 13.43 L1.46 12.90 L1.11 12.38 L0.73 11.84 L0.38 11.27 L0.14 10.65 L0.05 10.00 L0.14 9.35 L0.38 8.73 L0.73 8.16 L1.11 7.62 L1.46 7.10 L1.73 6.57 L1.91 6.01 L2.03 5.40 L2.14 4.75 L2.30 4.10 L2.57 3.48 L2.96 2.96 L3.48 2.57 L4.10 2.30 L4.75 2.14 L5.40 2.03 L6.01 1.91 L6.57 1.73 L7.10 1.46 L7.62 1.11 L8.16 0.73 L8.73 0.38 L9.35 0.14Z" fill="#f7b232"/><rect x="4.9" y="9" width="10" height="2" fill="#3a3428"/></svg>
<div class="t c" style="left:286px;top:657.50px;">Caution</div>
<div class="t c" style="left:381px;top:657.50px;letter-spacing:0.075px;">dashboard</div>
<div class="t c" style="left:518px;top:657.50px;letter-spacing:-0.389px;">PARTNER Engineering</div>
<div class="t c" style="left:723px;top:657.50px;letter-spacing:0.196px;">partner_engineering@dbtla…</div>
<svg class="tab" style="left:928px;top:657px" width="20" height="20" viewBox="0 0 20 20"><path d="M6.60 9.7H13.20M9.9 5.90V13.50" stroke="#e8762d" stroke-width="1.1"/><path d="M1.80 4.9H7.80M4.8 1.90V7.90" stroke="#eb912c" stroke-width="1.0"/><path d="M7.90 2.2H11.90M9.9 0.20V4.20" stroke="#5b879b" stroke-width="0.9"/><path d="M12.00 4.9H18.00M15.0 1.90V7.90" stroke="#5b879b" stroke-width="1.0"/><path d="M0.00 9.7H4.00M2.0 7.70V11.70" stroke="#5b879b" stroke-width="0.9"/><path d="M16.00 9.7H20.00M18.0 7.70V11.70" stroke="#7b75a8" stroke-width="0.9"/><path d="M1.80 14.5H7.80M4.8 11.50V17.50" stroke="#c72037" stroke-width="1.0"/><path d="M7.90 17.5H11.90M9.9 15.50V19.50" stroke="#5c6692" stroke-width="0.9"/><path d="M12.00 14.5H18.00M15.0 11.50V17.50" stroke="#1f457e" stroke-width="1.0"/></svg>
<div class="t c" style="left:954px;top:657.50px;">Tableau</div>
<div class="t c" style="left:1064px;top:657.50px;">Auto</div>
<div class="hl" style="top:692px"></div>
<div class="faint" style="left:62px;width:505px"></div>
<div class="faint" style="left:663px;width:506px"></div>
<div class="t lm" style="left:578px;top:709.50px;letter-spacing:0.091px;">Load more...</div>
<div class="hl" style="top:744px"></div>
<div class="t c" style="left:41.5px;top:795.50px;letter-spacing:-0.264px;">Loaded 10 of 13</div>
<div class="sbtn"></div>
<div class="t ft" style="left:1065px;top:795.50px;letter-spacing:-0.225px;">Show:</div>
<div class="t ft" style="left:1109px;top:795.50px;letter-spacing:-0.467px;">10 Rows</div>
<svg class="chev" style="left:1167.5px;top:803px" width="7" height="5" viewBox="0 0 7 5"><path d="M0.7 0.9 L3.5 3.7 L6.3 0.9" fill="none" stroke="#252d3a" stroke-width="1.1"/></svg>
</body></html>
